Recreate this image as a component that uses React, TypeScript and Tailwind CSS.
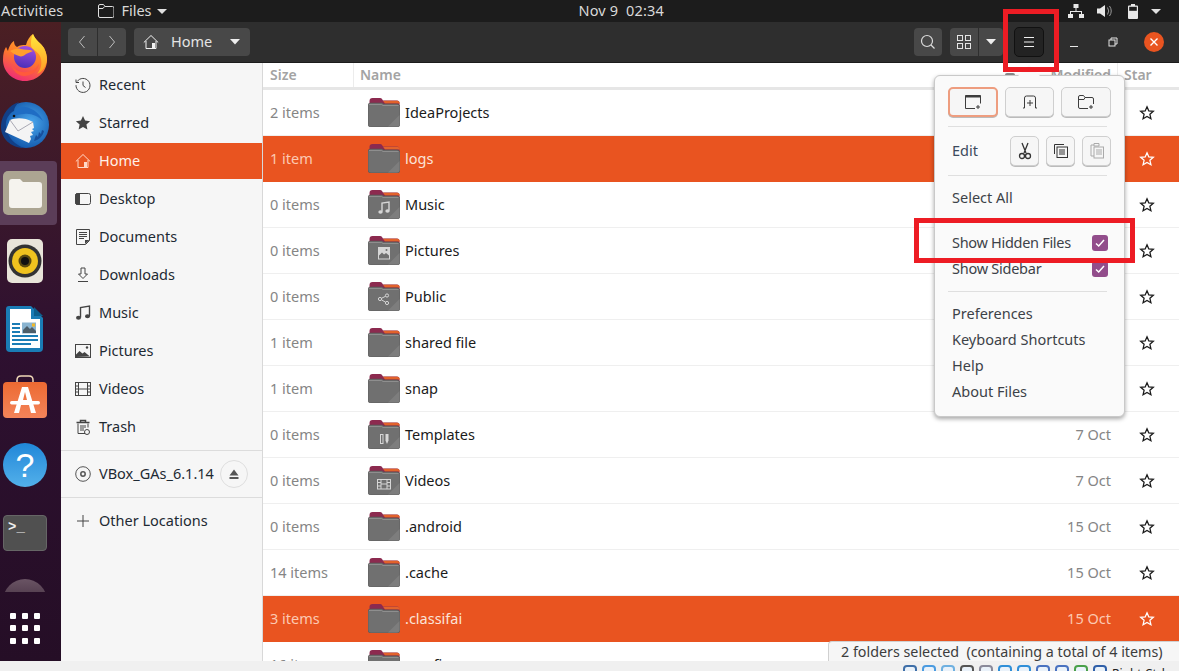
import type { ReactNode } from 'react'

const uiFont = 'font-["Noto_Sans","Open_Sans",sans-serif]'

function Sym({ children, className = 'text-[#3d3d3d]', size = 16 }: { children: ReactNode; className?: string; size?: number }) {
  return (
    <svg width={size} height={size} viewBox="0 0 16 16" fill="none" stroke="currentColor" strokeWidth="1" className={`shrink-0 ${className}`}>
      {children}
    </svg>
  )
}

const sideIcons: Record<string, ReactNode> = {
  recent: (
    <>
      <path d="M2.2 4.5A7 7 0 1 1 1 8.2" />
      <path d="M1 2.5v3h3" />
      <path d="M8 4.5V8.500l2.500 2" />
    </>
  ),
  starred: <path d="M8 1l2.100 4.600 5 .6-3.700 3.400 1 5L8 12.100 3.600 14.600l1-5L.9 6.200l5-.6z" fill="currentColor" stroke="none" />,
  home: (
    <>
      <path d="M.8 8.500 8 1.500l7.200 7" />
      <path d="M3 7v7.500h10V7" />
      <rect x="9" y="9" width="3" height="5.500" fill="currentColor" stroke="none" />
    </>
  ),
  desktop: (
    <>
      <rect x=".5" y="2.500" width="15" height="11" rx="2" />
      <path d="M.5 4.500a2 2 0 0 1 2-2h2v11h-2a2 2 0 0 1-2-2z" fill="currentColor" />
    </>
  ),
  documents: (
    <>
      <path d="M1.500 .5h13v11l-4 4h-9z" />
      <path d="M4 3.500h8M4 5.500h8M4 7.500h8M4 9.500h5" />
      <path d="M10 15v-4h4.500z" fill="currentColor" stroke="none" />
    </>
  ),
  downloads: (
    <>
      <path d="M6 1h4v6h2.500L8 11.500 3.500 7H6z" />
      <path d="M3 14.500h10" />
    </>
  ),
  music: (
    <>
      <path d="M5.500 12.500V2.500l9-1.500v10" strokeWidth="1.400" />
      <ellipse cx="3.500" cy="12.700" rx="2.500" ry="2" fill="currentColor" stroke="none" />
      <ellipse cx="12.500" cy="11.200" rx="2.500" ry="2" fill="currentColor" stroke="none" />
    </>
  ),
  pictures: (
    <>
      <rect x=".5" y="1.500" width="15" height="13" />
      <path d="M1 14v-2.500l3.500-3.500 3 2.500 2-1.500 5.500 4.500z" fill="currentColor" stroke="none" />
      <circle cx="12" cy="4.500" r="1.200" fill="currentColor" stroke="none" />
    </>
  ),
  videos: (
    <>
      <rect x=".5" y="1.500" width="15" height="13" />
      <path d="M3.500 2v12M12.500 2v12M3.500 8h9M.5 5h3M.5 8h3M.5 11h3M12.500 5h3M12.500 8h3M12.500 11h3" />
    </>
  ),
  trash: (
    <>
      <path d="M3 4.500v10h7" />
      <path d="M13 4.500v4" />
      <path d="M1.500 3.500h13M5.500 3V1.500h5V3" strokeWidth="1.500" />
      <path d="M6 6v6M8 6v6M10 6v3" />
      <circle cx="12" cy="13" r="2.500" />
    </>
  ),
  disc: (
    <>
      <circle cx="8" cy="8" r="7.300" />
      <circle cx="8" cy="8" r="2.200" strokeWidth="1.500" />
    </>
  ),
  plus: <path d="M8 2v12M2 8h12" />,
}

const places = [
  ['recent', 'Recent'],
  ['starred', 'Starred'],
  ['home', 'Home'],
  ['desktop', 'Desktop'],
  ['documents', 'Documents'],
  ['downloads', 'Downloads'],
  ['music', 'Music'],
  ['pictures', 'Pictures'],
  ['videos', 'Videos'],
  ['trash', 'Trash'],
]

function SidebarRow({ icon, label, active }: { icon: string; label: string; active?: boolean }) {
  return (
    <div className={`flex h-9 items-center gap-2 pl-[14px] ${active ? 'bg-[#e95420] text-[#fff0e8]' : 'text-[#1e2a33]'}`}>
      <Sym className={active ? 'text-[#ffd9c8]' : 'text-[#444]'}>{sideIcons[icon]}</Sym>
      <span>{label}</span>
    </div>
  )
}

function Sidebar() {
  return (
    <aside className="flex w-[202px] shrink-0 flex-col border-r border-[#d8d8d8] bg-[#f6f6f6] pt-1 text-[14.5px]">
      <div className="flex flex-col gap-[2px]">
        {places.map(([icon, label]) => (
          <SidebarRow key={label} icon={icon} label={label} active={label === 'Home'} />
        ))}
      </div>
      <div className="mt-[5px] border-t border-[#dcdcdc] pt-[5px]">
        <div className="flex h-9 items-center gap-2 pl-[14px] text-[#1e2a33]">
          <Sym className="text-[#555]">{sideIcons.disc}</Sym>
          <span className="whitespace-nowrap">VBox_GAs_6.1.14</span>
          <div className="ml-[-2px] flex size-7 items-center justify-center rounded-full border border-[#dedede] bg-[#f6f6f6]">
            <svg width="10" height="10" viewBox="0 0 10 10" fill="#555">
              <path d="M5 .5 9.500 6.500H.5zM.5 8h9v2h-9z" />
            </svg>
          </div>
        </div>
      </div>
      <div className="mt-[5px] border-t border-[#dcdcdc] pt-[5px]">
        <SidebarRow icon="plus" label="Other Locations" />
      </div>
    </aside>
  )
}

const emblems: Record<string, ReactNode> = {
  Music: (
    <g fill="#d6d6d6" stroke="#d6d6d6">
      <path d="M14 21.500V13l7-1v8.500" fill="none" strokeWidth="1.400" />
      <ellipse cx="12.500" cy="22" rx="2.200" ry="1.700" stroke="none" />
      <ellipse cx="19.500" cy="21" rx="2.200" ry="1.700" stroke="none" />
    </g>
  ),
  Pictures: (
    <g>
      <rect x="10" y="11" width="12" height="12.500" fill="#d6d6d6" />
      <path d="M11 22.500v-3l3-3 2 2 2-1.500 3 2.500v3z" fill="#6f6f6f" />
      <circle cx="18.500" cy="14" r="1" fill="#6f6f6f" />
    </g>
  ),
  Public: (
    <g fill="none" stroke="#d6d6d6" strokeWidth="1">
      <circle cx="12" cy="17" r="1.600" />
      <circle cx="19" cy="13.500" r="1.600" />
      <circle cx="19" cy="21" r="1.600" />
      <path d="m13.500 16.300 4-2M13.500 17.800l4 2.400" />
    </g>
  ),
  Templates: (
    <g fill="#d6d6d6">
      <path d="M12 14h3.500v10H12zm1 1v8h1.500v-8z" fillRule="evenodd" />
      <path d="M17.500 14h3v6.500l-1.500 3.500-1.500-3.500z" />
    </g>
  ),
  Videos: (
    <g stroke="#d6d6d6" strokeWidth="1" fill="none">
      <rect x="9.500" y="13.500" width="13" height="9.500" />
      <path d="M13 13.500V23M19 13.500V23M13 18h6M9.500 16.500H13M9.500 20H13M19 16.500h3.500M19 20h3.500" />
    </g>
  ),
}

function Folder({ name }: { name: string }) {
  return (
    <svg width="32" height="29" viewBox="0 0 32 29" className="shrink-0">
      <path d="M1.500 3Q1.500 0 4.500 0H12q1.500 0 2 1l1 1.500h14q2.500 0 2.500 3V8H1.500z" fill="#8c2a4f" />
      <path d="M15 2.800h14.500q2 0 2.500 2.700H17z" fill="#e2622b" />
      <path d="M0 7.500q0-2.500 2.500-2.500H14l1.500 1H29q3 0 3 3v17q0 3-3 3H3q-3 0-3-3z" fill="#707070" stroke="#545454" strokeWidth=".6" />
      <path d="M1 6.500h12.500L15 7.500h15.500" stroke="#9b9b9b" fill="none" strokeWidth=".7" />
      <path d="M20 28.500 31.500 17v9q0 2.500-2.500 2.500z" fill="#7d7d7d" />
      {emblems[name]}
    </svg>
  )
}

const files = [
  ['2 items', 'IdeaProjects', '', false],
  ['1 item', 'logs', '', true],
  ['0 items', 'Music', '', false],
  ['0 items', 'Pictures', '', false],
  ['0 items', 'Public', '', false],
  ['1 item', 'shared file', '', false],
  ['1 item', 'snap', '', false],
  ['0 items', 'Templates', '7 Oct', false],
  ['0 items', 'Videos', '7 Oct', false],
  ['0 items', '.android', '15 Oct', false],
  ['14 items', '.cache', '15 Oct', false],
  ['3 items', '.classifai', '15 Oct', true],
  ['16 items', '.config', '15 Oct', false],
] as [string, string, string, boolean][]

const cols = 'grid grid-cols-[90px_1fr_118px_62px]'

function FileRow({ size, name, date, selected }: { size: string; name: string; date: string; selected: boolean }) {
  return (
    <div className={`${cols} h-[46px] shrink-0 items-center border-b border-[#efefef] ${selected ? 'border-transparent bg-[#e95420] text-[#fbe3d8]' : 'bg-white text-[#1b1b1b]'}`}>
      <span className={`pl-[7px] ${selected ? 'text-[#fcc9b2]' : 'text-[#858585]'}`}>{size}</span>
      <div className="flex items-center gap-[5px] pl-[15px]">
        <Folder name={name} />
        <span>{name}</span>
      </div>
      <span className={`pr-[6px] text-right ${selected ? 'text-[#fcc9b2]' : 'text-[#858585]'}`}>{date}</span>
      <div className="pl-[22px]">
        <svg width="16" height="16" viewBox="0 0 16 16" fill="none" stroke={selected ? '#fff' : '#1b1b1b'} strokeWidth="1.300">
          <path d="M8 1.800l1.800 4.100 4.500.4-3.400 3 1 4.400L8 11.400l-3.900 2.300 1-4.400-3.400-3 4.500-.4z" />
        </svg>
      </div>
    </div>
  )
}

function FileList() {
  return (
    <section className="flex min-w-0 flex-1 flex-col overflow-hidden bg-white text-[14.5px]">
      <div className={`${cols} h-[27px] shrink-0 items-center border-b-[3px] border-[#e6e6e6] text-[14px] font-semibold text-[#a3a3a3]`}>
        <span className="h-full pl-[7px] leading-[23px]">Size</span>
        <span className="h-full border-l border-[#ececec] pl-[6px] leading-[23px]">Name</span>
        <span className="h-full pr-[6px] text-right leading-[23px]">Modified</span>
        <span className="h-full border-l border-[#ececec] pl-[6px] leading-[23px]">Star</span>
      </div>
      {files.map(([size, name, date, selected]) => (
        <FileRow key={name} size={size} name={name} date={date} selected={selected} />
      ))}
    </section>
  )
}

function HeaderBar() {
  const btn = 'flex items-center justify-center rounded-[4px] bg-[#484848]'
  return (
    <header className="flex h-[41px] shrink-0 items-center border-b border-[#1c1c1c] bg-[#2e2e2e] pl-[7px] text-[14.5px] text-[#e4e4e4]">
      <div className="flex h-7 w-[58px] overflow-hidden rounded-[4px] bg-[#484848]">
        <div className="flex flex-1 items-center justify-center border-r border-[#2e2e2e]">
          <svg width="8" height="16" viewBox="0 0 8 16" fill="none" stroke="#bdbdbd"><path d="M6.500 2 1.500 8l5 6" /></svg>
        </div>
        <div className="flex flex-1 items-center justify-center">
          <svg width="8" height="16" viewBox="0 0 8 16" fill="none" stroke="#bdbdbd"><path d="m1.500 2 5 6-5 6" /></svg>
        </div>
      </div>
      <div className={`${btn} ml-2 h-7 w-[116px] justify-start pl-[9px]`}>
        <Sym className="text-[#f2f2f2]">{sideIcons.home}</Sym>
        <span className="ml-[12px]">Home</span>
        <svg width="12" height="6" viewBox="0 0 12 6" fill="#eee" className="ml-[17px]"><path d="M1 0h10L6 5.500z" /></svg>
      </div>
      <div className={`${btn} ml-[664px] size-7`}>
        <svg width="16" height="16" viewBox="0 0 16 16" fill="none" stroke="#dcdcdc" strokeWidth="1.200"><circle cx="7" cy="7" r="5.500" /><path d="m11 11 3.500 3.500" /></svg>
      </div>
      <div className="ml-2 flex h-7 w-[53px] overflow-hidden rounded-[4px] bg-[#484848]">
        <div className="flex w-[29px] items-center justify-center border-r border-[#2e2e2e]">
          <svg width="14" height="14" viewBox="0 0 14 14" fill="none" stroke="#e4e4e4"><rect x=".5" y=".5" width="5" height="5" /><rect x="8.500" y=".5" width="5" height="5" /><rect x=".5" y="8.500" width="5" height="5" /><rect x="8.500" y="8.500" width="5" height="5" /></svg>
        </div>
        <div className="flex flex-1 items-center justify-center">
          <svg width="12" height="6" viewBox="0 0 12 6" fill="#eee"><path d="M1 0h10L6 5.500z" /></svg>
        </div>
      </div>
      <div className="ml-[11px] flex h-[30px] w-[30px] items-center justify-center rounded-[5px] border border-[#111] bg-[#232323]">
        <svg width="12" height="12" viewBox="0 0 12 12" stroke="#f0f0f0"><path d="M1 1.500h10M1 6h10M1 10.500h10" /></svg>
      </div>
      <div className="ml-[24px] flex w-[12px] justify-center">
        <div className="mt-[9px] h-px w-2 bg-[#e8e8e8]" />
      </div>
      <svg width="10" height="10" viewBox="0 0 10 10" fill="none" stroke="#e4e4e4" className="ml-[28px]"><rect x="1" y="3" width="6" height="6" /><path d="M3 3V1h6v6H7" /></svg>
      <div className="ml-[26px] flex size-5 items-center justify-center rounded-full bg-[#e95420]">
        <svg width="10" height="10" viewBox="0 0 10 10" stroke="#fff" strokeWidth="1.400"><path d="m1.500 1.500 7 7M8.500 1.500l-7 7" /></svg>
      </div>
    </header>
  )
}

function MenuButton({ children, className = '' }: { children: ReactNode; className?: string }) {
  return (
    <div className={`flex h-[30px] items-center justify-center rounded-[5px] border border-[#cfcfcf] bg-[#f6f6f6] shadow-[0_1px_0_#bbb] ${className}`}>
      {children}
    </div>
  )
}

function MenuCheck() {
  return (
    <div className="flex size-4 items-center justify-center rounded-[3px] bg-[#924d8b]">
      <svg width="10" height="10" viewBox="0 0 10 10" fill="none" stroke="#fff" strokeWidth="1.500"><path d="m1 5.500 2.700 2.500L9 2" /></svg>
    </div>
  )
}

function Popover() {
  return (
    <div className="absolute top-[75px] left-[934px] z-10 h-[342px] w-[191px] rounded-[6px] border border-[#c9c9c9] bg-[#fafafa] pt-[11px] pr-[13px] pl-[13px] text-[14.5px] text-[#3d4248] shadow-[0_2px_4px_rgba(0,0,0,0.35)]">
      <div className="absolute top-[-11px] left-[83px] size-0 border-x-[11px] border-b-[11px] border-x-transparent border-b-[#fafafa]" />
      <div className="flex gap-[7px]">
        <MenuButton className="w-[50px] border-2 border-[#ee9d7f]">
          <svg width="16" height="16" viewBox="0 0 16 16" fill="none" stroke="#3d3d3d"><path d="M.5 14.500v-13h15v8M10 14.500H.5" /><path d="M.5 2.500h15" strokeWidth="2" /><path d="M13 11v4M11 13h4" /></svg>
        </MenuButton>
        <MenuButton className="w-[50px]">
          <svg width="16" height="16" viewBox="0 0 16 16" fill="none" stroke="#3d3d3d"><path d="M1 14h1.500V4Q2.500 2 4.500 2h7q2 0 2 2v10H15" /><path d="M8 6v6M5 9h6" /></svg>
        </MenuButton>
        <MenuButton className="w-[50px]">
          <svg width="16" height="16" viewBox="0 0 16 16" fill="none" stroke="#3d3d3d"><path d="M10 14.500H2q-1.500 0-1.500-1.500V3Q.5 1.500 2 1.500h3.500L7 3.500h7q1.500 0 1.500 1.500v5" /><path d="M.5 5.500H6L7 3.500" /><path d="M13 11v4M11 13h4" /></svg>
        </MenuButton>
      </div>
      <div className="mt-[9px] h-px w-[159px] bg-[#dfdfdf]" />
      <div className="mt-[9px] flex items-center">
        <span className="pl-[4px] text-[#3c4a5c]">Edit</span>
        <div className="ml-auto mr-0 flex gap-[7px]">
          <MenuButton className="w-[29px]">
            <svg width="14" height="18" viewBox="0 0 14 18" fill="none" stroke="#333"><path d="M4 1l4 10M10 1 6 11" strokeWidth="1.300" /><circle cx="4" cy="14" r="2.500" strokeWidth="1.300" /><circle cx="10" cy="14" r="2.500" strokeWidth="1.300" /></svg>
          </MenuButton>
          <MenuButton className="w-[29px]">
            <svg width="14" height="14" viewBox="0 0 14 14" fill="none" stroke="#333"><path d="M.5 10V.5H10" /><rect x="3" y="3" width="10.500" height="10.500" /><path d="M5 6h6M5 8h6M5 10h6" /></svg>
          </MenuButton>
          <MenuButton className="w-[29px]">
            <svg width="14" height="16" viewBox="0 0 14 16" fill="none" stroke="#aaa"><path d="M4 2H1v11h3" /><path d="M4 .5h5V3H4z" /><rect x="4" y="4" width="9.500" height="11" /><path d="M6 7h6M6 9h6M6 11h6" /></svg>
          </MenuButton>
        </div>
      </div>
      <div className="mt-[9px] h-px w-[159px] bg-[#dfdfdf]" />
      <div className="mt-[11px] pl-[4px] leading-[21px]">Select All</div>
      <div className="mt-[24px] flex items-center justify-between pr-[3px] pl-[4px] leading-[21px]">
        <span className="tracking-[-0.3px]">Show Hidden Files</span>
        <MenuCheck />
      </div>
      <div className="mt-[5px] flex items-center justify-between pr-[3px] pl-[4px] leading-[21px]">
        <span className="tracking-[-0.25px]">Show Sidebar</span>
        <MenuCheck />
      </div>
      <div className="mt-[12px] h-px w-[159px] bg-[#dfdfdf]" />
      <div className="mt-[11px] flex flex-col gap-[5px] pl-[4px] leading-[21px]">
        <span>Preferences</span>
        <span>Keyboard Shortcuts</span>
        <span>Help</span>
        <span>About Files</span>
      </div>
    </div>
  )
}

function Firefox() {
  return (
    <svg width="46" height="48" viewBox="0 0 46 48">
      <defs>
        <linearGradient id="ff" x1="0.7" y1="0" x2="0.3" y2="1"><stop offset="0" stopColor="#ffb52e" /><stop offset=".5" stopColor="#ff7a2a" /><stop offset="1" stopColor="#ee2a78" /></linearGradient>
        <linearGradient id="ffi" x1="0.6" y1="0" x2="0.4" y2="1"><stop offset="0" stopColor="#a14fe0" /><stop offset="1" stopColor="#4a2fb8" /></linearGradient>
        <linearGradient id="ffy" x1="0.5" y1="0" x2="0.5" y2="1"><stop offset="0" stopColor="#ffe83d" /><stop offset="1" stopColor="#ff9a25" /></linearGradient>
      </defs>
      <path d="M1 27C1 21 2 17 4 14c1 1 1 3 2 4 1-5 4-9 6-10 0 3 1 5 3 6 3-2 6-2 9-2 1-5 4-9 7-11 2 6 8 9 11 14 2 4 3 8 3 12 0 12-10 21-22 21C10 48 1 38 1 27z" fill="url(#ff)" />
      <path d="M31 1c2 6 8 9 11 14 2 4 3 8 3 12-1 7-5 12-10 14 4-5 5-10 4-15-1-6-6-8-9-11-1-2-1-3-1-5 0-4 1-7 2-9z" fill="url(#ffy)" />
      <circle cx="23" cy="24" r="11" fill="url(#ffi)" />
      <path d="M8 18c4-2 8-3 11-2 4 1 8 0 12 2-2 1-5 2-7 3-2 2-5 3-7 2-4-1-6-3-9-5z" fill="#ff9e2d" />
      <path d="M9 31c3 7 12 10 20 7 4-1 6-4 8-7-1 7-8 12-15 12-6 0-11-5-13-12z" fill="#ff5a3c" />
    </svg>
  )
}

function Thunderbird() {
  return (
    <svg width="50" height="48" viewBox="0 0 50 48">
      <defs>
        <radialGradient id="tb" cx=".6" cy=".45" r=".65"><stop offset="0" stopColor="#4aa8ee" /><stop offset="1" stopColor="#0c4fa4" /></radialGradient>
      </defs>
      <circle cx="26" cy="24" r="23" fill="url(#tb)" />
      <path d="M1 24C2 13 9 4 19 1c-3 3-5 6-5 9-4 2-7 6-8 11-1 7 2 15 9 21 3 2 6 4 9 5C11 47 0 37 1 24z" fill="#123f86" />
      <path d="M12 15c2-6 8-10 13-9 8 1 15 7 18 14-5-5-12-8-19-7-4 0-8 1-12 2z" fill="#1f6dc4" />
      <circle cx="14" cy="15" r="1.300" fill="#111" />
      <path d="M10 19c5-2 14-3 23 2l1 6-2 1 2 2-3 1 2 3-3 1 1 3-2 4L5 31z" fill="#f4f4f4" />
      <path d="M10 19 18 30l15-9" stroke="#a9a9b4" strokeWidth="1" fill="none" />
      <path d="M34 40l2-6 2 2 1-5 2 2 1-4 2 1c-1 5-5 9-10 10z" fill="#174f9c" />
    </svg>
  )
}

function Rhythmbox() {
  return (
    <div className="flex h-[44px] w-[36px] items-center justify-center rounded-[5px] bg-[#e8e4d9]">
      <svg width="34" height="34" viewBox="0 0 34 34">
        <circle cx="17" cy="17" r="16.500" fill="#333" />
        <circle cx="17" cy="17" r="13" fill="#f0c31f" />
        <circle cx="17" cy="17" r="6.500" fill="#5a4a10" />
        <circle cx="17" cy="17" r="4" fill="#111" />
      </svg>
    </div>
  )
}

function Writer() {
  return (
    <svg width="38" height="46" viewBox="0 0 38 46">
      <path d="M3 0h22l12 12v30q0 4-4 4H4q-4 0-4-4V3q0-3 3-3z" fill="#1a7cb5" />
      <path d="M28 1l9 9h-9z" fill="#0d5f8d" />
      <path d="M4 3h21v10h9v29H4z" fill="#fff" />
      <path d="M6 17h8v2H6zM6 21h8v2H6zM6 25h8v2H6zM6 29h26v2H6zM6 33h26v2H6zM6 37h19v2H6z" fill="#1a7cb5" />
      <rect x="16" y="16.500" width="14" height="11" fill="#8ab4d0" />
      <path d="M17 27v-3l4-4 3 3 2-2 4 4v2z" fill="#4c5d68" />
      <rect x="26" y="17.500" width="3" height="3" fill="#f2b827" />
    </svg>
  )
}

function Software() {
  return (
    <svg width="46" height="44" viewBox="0 0 46 44">
      <defs>
        <linearGradient id="sw" x1="0" y1="0" x2="0" y2="1"><stop offset="0" stopColor="#ec6a32" /><stop offset="1" stopColor="#f4845a" /></linearGradient>
      </defs>
      <path d="M15 7V5q0-4 4-4h8q4 0 4 4v2" stroke="#f0d8b8" strokeWidth="1.500" fill="none" />
      <rect x="1" y="7" width="44" height="36" rx="4" fill="url(#sw)" />
      <path d="M20 12h6l8 26h-5l-2-8H19l-2 8h-5zm1 13h4l-2-8z" fill="#fff" fillRule="evenodd" />
      <rect x="8" y="26" width="30" height="3.500" rx="1.700" fill="#fff" />
    </svg>
  )
}

function DockItem({ children }: { children: ReactNode }) {
  return <div className="flex h-[68px] shrink-0 items-center justify-center pr-[11px]">{children}</div>
}

function Dock() {
  const dots = Array.from({ length: 9 })
  return (
    <nav className="flex w-[61px] shrink-0 flex-col bg-gradient-to-b from-[#4b1f23] via-[#2e1030] to-[#250e26]">
      <div className="flex h-[570px] flex-col overflow-hidden pt-px">
        <DockItem><Firefox /></DockItem>
        <DockItem><Thunderbird /></DockItem>
        <div className="flex h-[68px] shrink-0 items-center">
          <div className="flex h-16 w-[57px] items-center justify-center rounded-r-[4px] bg-[#5b3d58] pr-[7px]">
            <div className="flex size-11 items-center justify-center rounded-[5px] bg-[#aca592]">
              <svg width="33" height="29" viewBox="0 0 33 29"><path d="M0 3q0-3 3-3h8l3 3h16q3 0 3 3v20q0 3-3 3H3q-3 0-3-3z" fill="#f5f3ee" /></svg>
            </div>
          </div>
        </div>
        <DockItem><Rhythmbox /></DockItem>
        <DockItem><Writer /></DockItem>
        <DockItem><Software /></DockItem>
        <DockItem>
          <div className="flex size-[44px] items-center justify-center rounded-full bg-gradient-to-b from-[#1f87d8] to-[#52b0ea] font-['Liberation_Sans',sans-serif] text-[34px] leading-none text-white">?</div>
        </DockItem>
        <DockItem>
          <div className="h-9 w-11 rounded-[4px] border border-[#666] bg-[#505050] pl-1 font-['Liberation_Mono',monospace] text-[14px] leading-[22px] font-bold text-[#eee]">&gt;_</div>
        </DockItem>
        <div className="mt-[12px] h-[56px] shrink-0">
          <div className="ml-[3px] h-11 w-11 rounded-full bg-gradient-to-b from-[#6a5464] to-[#2e1a2c]" />
        </div>
      </div>
      <div className="mt-[21px] grid w-[30px] translate-x-[10px] grid-cols-3 gap-x-[6px] gap-y-[6.300px]">
        {dots.map((_, i) => (
          <div key={i} className="size-[6px] rounded-[1px] bg-white" />
        ))}
      </div>
    </nav>
  )
}

function TopBar() {
  return (
    <div className="flex h-[22px] shrink-0 items-center bg-[#1c1c1c] pl-[1px] text-[14.5px] text-[#d9d9d9]">
      <span className="tracking-[0.2px]">Activities</span>
      <svg width="16" height="14" viewBox="0 0 16 14" fill="none" stroke="#e0e0e0" className="ml-[35px]">
        <path d="M.5 2q0-1.500 1.500-1.500h3.500l1.500 2h7.500q1.500 0 1.500 1.500v8q0 1.500-1.500 1.500H2Q.5 13.500.5 12zM.5 4.500H5L6.500 2.500" />
      </svg>
      <span className="ml-[7px]">Files</span>
      <svg width="10" height="5" viewBox="0 0 10 5" fill="#e0e0e0" className="ml-[5px]"><path d="M0 0h10L5 5z" /></svg>
      <span className="ml-[412px] w-[92px] whitespace-pre tracking-[0.15px]">Nov 9  02:34</span>
      <svg width="16" height="14" viewBox="0 0 16 14" fill="#e8e8e8" className="ml-[397px]">
        <path d="M5.500 0h5v4H8.500v3H14v3h2v4h-5v-4h2V8H3v2h2v4H0v-4h2V7h5.500V4h-2z" />
      </svg>
      <svg width="16" height="14" viewBox="0 0 16 14" fill="#e8e8e8" className="ml-[13px]">
        <path d="M0 4.500h3L8 1v12L3 9.500H0z" />
        <path d="M10.500 3.500q2.500 3.500 0 7M12.500 2q3.500 5 0 10" stroke="#9a9a9a" strokeWidth="1" fill="none" />
      </svg>
      <svg width="10" height="15" viewBox="0 0 10 15" className="ml-[15px]">
        <path d="M3 0h4v1.500h2q1 0 1 1V14q0 1-1 1H1q-1 0-1-1V2.500q0-1 1-1h2z" fill="#e8e8e8" />
        <rect x="1.200" y="2.800" width="7.600" height="4" fill="#1c1c1c" />
      </svg>
      <svg width="10" height="5" viewBox="0 0 10 5" fill="#e0e0e0" className="ml-[13px]"><path d="M0 0h10L5 5z" /></svg>
    </div>
  )
}

function HostTray() {
  const tints = [
    'border-[#3f6fa8]',
    'border-[#4b9be0]',
    'border-[#6fb0e0]',
    'border-[#555]',
    'border-[#8a8a9a]',
    'border-[#2f8fd8]',
    'border-[#2f8fd8]',
    'border-[#4a72c0]',
    'border-[#4a72c0]',
    'border-[#4aa04a]',
    'border-[#2f5fa8]',
  ]
  return (
    <div className="flex h-[10px] shrink-0 items-start overflow-hidden bg-[#f0f0f0] pt-[4px] pl-[903px]">
      <div className="flex items-start gap-[5px]">
        {tints.map((c, i) => (
          <div key={c + i} className={`h-4 w-[14px] rounded-t-[4px] border-2 bg-[#eaf2fa] ${c}`} />
        ))}
      </div>
      <span className="ml-[5px] text-[12px] whitespace-nowrap text-[#222]">Right Ctrl</span>
    </div>
  )
}

export default function App() {
  return (
    <div className={`relative flex h-[671px] w-[1179px] flex-col overflow-hidden bg-[#f0f0f0] ${uiFont}`}>
      <TopBar />
      <div className="flex min-h-0 flex-1">
        <Dock />
        <div className="flex min-w-0 flex-1 flex-col">
          <HeaderBar />
          <div className="flex min-h-0 flex-1">
            <Sidebar />
            <FileList />
          </div>
        </div>
      </div>
      <HostTray />
      <div className="absolute top-[73px] left-[1005px] z-[5] h-[3px] w-[10px] rounded-t-[2px] bg-[#8a8a8a]" />
      <Popover />
      <div className="absolute top-[641px] left-[828px] z-10 flex h-5 w-[351px] items-center rounded-tl-[4px] border-t border-l border-[#d0d0d0] bg-[#f6f6f6] pl-[12px] text-[14.3px] whitespace-pre text-[#3d3d3d]">
        2 folders selected  (containing a total of 4 items)
      </div>
      <div className="pointer-events-none absolute top-[9px] left-[1003px] z-20 h-[63px] w-[56px] border-[5px] border-[#ed1c24]" />
      <div className="pointer-events-none absolute top-[218px] left-[914px] z-20 h-[45px] w-[221px] border-[5px] border-[#ed1c24]" />
    </div>
  )
}
